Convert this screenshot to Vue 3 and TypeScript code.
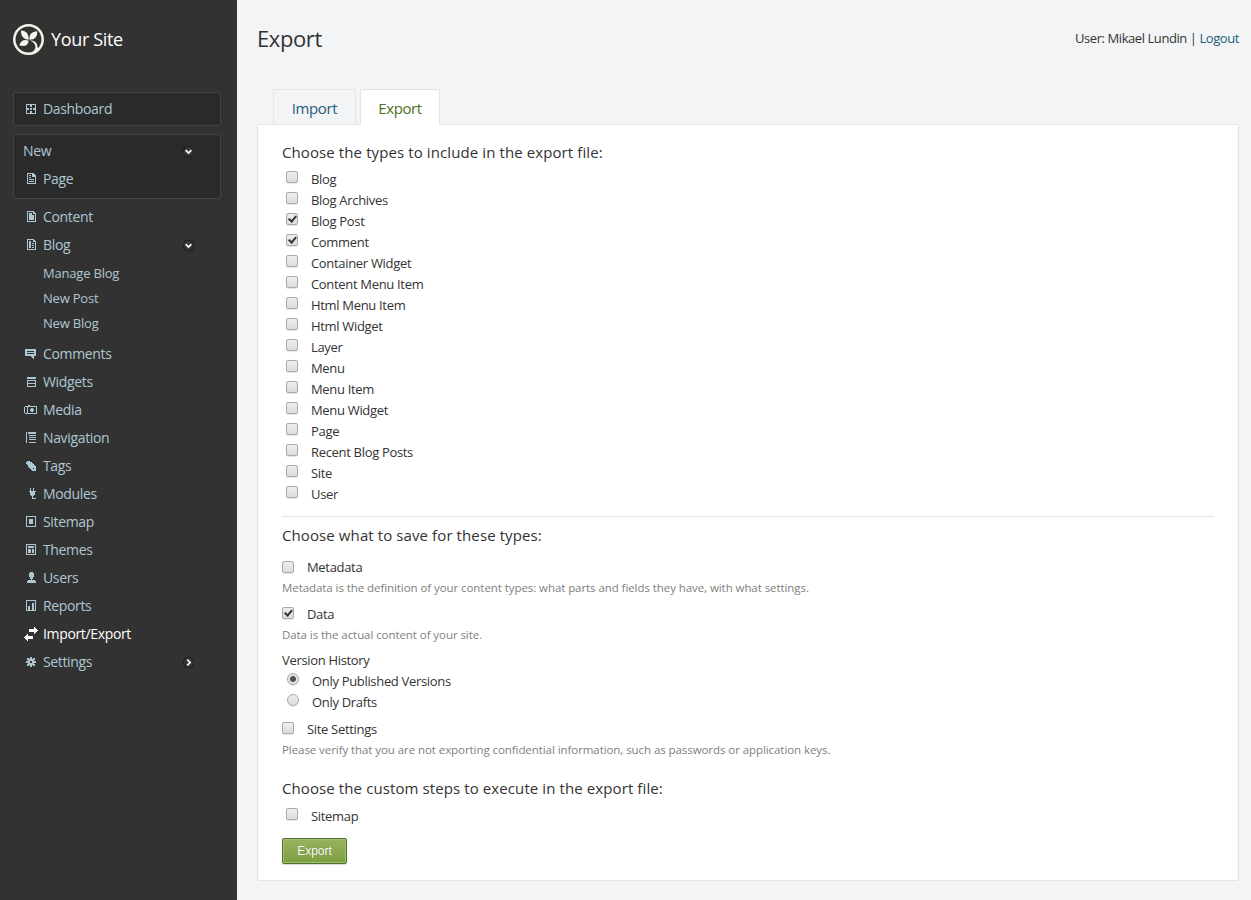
<script setup lang="ts">
import { ref } from 'vue'

interface NavItem {
  label: string
  icon: string
  active?: boolean
  toggle?: 'down' | 'right'
  children?: string[]
}

// Glyphs are drawn on a 16 x 16 grid, one unit per pixel.
const icons: Record<string, string> = {
  dashboard:
    'M3 3h10v10H3z M4 4v3h2v2H4v3h3v-2h2v2h3V9h-2V7h2V4H9v2H7V4z M7 7v2h2V7z',
  page: 'M4 2h6l3 3v8H4z M5 3v9h7V6H9V3z M6 4h2v1H6z M6 6h2v1H6z M6 8h5v1H6z M6 10h5v1H6z',
  content: 'M4 2h6l3 3v8H4z M5 3v9h7V5h-2V3z M6 4h3v2h2v5H6z',
  blog: 'M4 2h6l3 3v8H4z M5 3v9h7V5h-2V3z M6 4h2v7H6z M9 6h2v1H9z M9 8h2v1H9z M9 10h2v1H9z',
  comments: 'M2 3h11v7h-2v3H10v-1H9v-1H8v-1H2z M4 5v1h7V5z M4 7v1h7V7z',
  widgets: 'M4 3h9v2H4z M4 6h9v7H4z M5 7v2h7V7z M5 10v2h7v-2z',
  media:
    'M5 3h2v1h7v8H2v-1H1V5h1V4h3z M2 5v6h2V5z M5 5v6h8V5z M8 6h2v1h1v2h-1v1H8V9H7V7h1z',
  navigation:
    'M3 2h1v11H3z M5 2h8v2H5z M6 5h7v1H6z M6 7h7v1H6z M6 9h7v1H6z M6 12h7v1H6z',
  tags: 'M3 4h1V3h3v1h2v1h1v1h1v1h1v1h1v5h-4v-1H8v-1H7v-1H6V9H5V7H4V6H3z M10 10v1h1v-1z',
  modules:
    'M7 2h1v3h2V2h1v3h2v1h-1v3h-1v1h-1v2h3v1H9v-3H8V9H7V6H6V5h1z',
  sitemap: 'M3 2h10v11H3z M4 3v9h8V3z M6 5h4v5H6z',
  themes: 'M3 2h10v11H3z M4 3v9h8V3z M5 4h6v2H5z M5 7h3v4H5z M9 7h2v4H9z',
  users: 'M7 2h3v1h1v4h-1v2H9v1h3v1h1v2H4v-2h1v-1h3V9H7V7H6V3h1z',
  reports: 'M3 2h10v11H3z M4 3v9h8V3z M5 8h2v4H5z M9 5h2v7H9z',
  transfer:
    'M6 3h5V1h1v1h1v1h1v1h1v1h-1v1h-1v1h-1v1h-1V6H6z M10 10v3H5v2H4v-1H3v-1H2v-1H1v-1h1v-1h1V9h1V8h1v2z',
  settings:
    'M7 3h2v2h1V4h2v2h-1v1h2v2h-2v1h1v2h-2v-1H9v2H7v-2H6v1H4v-2h1V9H3V7h2V6H4V4h2v1h1z M7 7v2h2V7z',
}

const nav: NavItem[] = [
  { label: 'Content', icon: 'content' },
  {
    label: 'Blog',
    icon: 'blog',
    toggle: 'down',
    children: ['Manage Blog', 'New Post', 'New Blog'],
  },
  { label: 'Comments', icon: 'comments' },
  { label: 'Widgets', icon: 'widgets' },
  { label: 'Media', icon: 'media' },
  { label: 'Navigation', icon: 'navigation' },
  { label: 'Tags', icon: 'tags' },
  { label: 'Modules', icon: 'modules' },
  { label: 'Sitemap', icon: 'sitemap' },
  { label: 'Themes', icon: 'themes' },
  { label: 'Users', icon: 'users' },
  { label: 'Reports', icon: 'reports' },
  { label: 'Import/Export', icon: 'transfer', active: true },
  { label: 'Settings', icon: 'settings', toggle: 'right' },
]

const contentTypes: string[] = [
  'Blog',
  'Blog Archives',
  'Blog Post',
  'Comment',
  'Container Widget',
  'Content Menu Item',
  'Html Menu Item',
  'Html Widget',
  'Layer',
  'Menu',
  'Menu Item',
  'Menu Widget',
  'Page',
  'Recent Blog Posts',
  'Site',
  'User',
]

const selectedTypes = ref<string[]>(['Blog Post', 'Comment'])
const metadata = ref(false)
const data = ref(true)
const siteSettings = ref(false)
const sitemapStep = ref(false)
const version = ref<'published' | 'drafts'>('published')
</script>

<template>
  <div class="shell">
    <aside class="sidebar">
      <a class="brand">
        <svg class="logo" viewBox="0 0 31 31" width="31" height="31">
          <circle cx="15.5" cy="15.5" r="14.2" fill="none" stroke="#f4f5ea" stroke-width="2.5" />
          <path
            fill="#f4f5ea"
            d="M15.6 15.7C10.5 15.2 7.8 12 8 6.4c5.300 0 8 3.700 7.600 9.300zM16.500 15.700C15.900 10.600 18.800 7.300 24.200 7.200c.6 5.200-2.700 8.600-7.700 8.500zM15.700 16.700C15.300 21 12 23.200 6.300 21.200c1.400-4.500 5-6.200 9.400-4.500zM16.600 16.500c4.700-.3 8 2 7.900 6.800l2.700 1.700-5.800 4.600-2.600-.9c3.800-2.700 4.400-6 2.600-8.900-1.100-1.700-2.700-2.700-4.800-3.300z"
          />
        </svg>
        <span>Your Site</span>
      </a>

      <div class="box dashboard">
        <a class="row">
          <svg class="icon" viewBox="0 0 16 16"><path fill-rule="evenodd" :d="icons.dashboard" /></svg>
          <span class="text">Dashboard</span>
        </a>
      </div>

      <div class="box new">
        <div class="row">
          <span class="text">New</span>
          <svg class="toggle" viewBox="0 0 11 11">
            <rect x=".5" y=".5" width="10" height="10" rx="4" />
            <path d="M2.700 4.200L5.500 7l2.800-2.800" />
          </svg>
        </div>
        <a class="row">
          <svg class="icon" viewBox="0 0 16 16"><path fill-rule="evenodd" :d="icons.page" /></svg>
          <span class="text">Page</span>
        </a>
      </div>

      <nav class="menu">
        <template v-for="item in nav" :key="item.label">
          <a class="row" :class="{ active: item.active }">
            <svg class="icon" viewBox="0 0 16 16"><path fill-rule="evenodd" :d="icons[item.icon]" /></svg>
            <span class="text">{{ item.label }}</span>
            <svg v-if="item.toggle" class="toggle" viewBox="0 0 11 11">
              <rect x=".5" y=".5" width="10" height="10" rx="4" />
              <path :d="item.toggle === 'down' ? 'M2.700 4.200L5.500 7l2.800-2.800' : 'M4.300 2.700L7.100 5.500L4.300 8.300'" />
            </svg>
          </a>
          <div v-if="item.children" class="children">
            <a v-for="child in item.children" :key="child">{{ child }}</a>
          </div>
        </template>
      </nav>
    </aside>

    <main class="main">
      <header class="top">
        <h1>Export</h1>
        <div class="user">User: Mikael Lundin | <a>Logout</a></div>
      </header>

      <div class="tabs">
        <a class="tab">Import</a>
        <a class="tab current">Export</a>
      </div>

      <form class="panel" @submit.prevent>
        <h2>Choose the types to include in the export file:</h2>
        <div class="options">
          <label v-for="name in contentTypes" :key="name">
            <input v-model="selectedTypes" type="checkbox" :value="name" />
            <span>{{ name }}</span>
          </label>
        </div>

        <h2 class="ruled">Choose what to save for these types:</h2>
        <div class="setting first">
          <label>
            <input v-model="metadata" type="checkbox" />
            <span>Metadata</span>
          </label>
          <p class="hint">
            Metadata is the definition of your content types: what parts and fields they have, with what settings.
          </p>
        </div>
        <div class="setting">
          <label>
            <input v-model="data" type="checkbox" />
            <span>Data</span>
          </label>
          <p class="hint">Data is the actual content of your site.</p>
        </div>
        <div class="history">
          <div class="caption">Version History</div>
          <label>
            <input v-model="version" type="radio" value="published" />
            <span>Only Published Versions</span>
          </label>
          <label>
            <input v-model="version" type="radio" value="drafts" />
            <span>Only Drafts</span>
          </label>
        </div>
        <div class="setting site">
          <label>
            <input v-model="siteSettings" type="checkbox" />
            <span>Site Settings</span>
          </label>
          <p class="hint">
            Please verify that you are not exporting confidential information, such as passwords or application keys.
          </p>
        </div>

        <h2 class="steps">Choose the custom steps to execute in the export file:</h2>
        <div class="options">
          <label>
            <input v-model="sitemapStep" type="checkbox" />
            <span>Sitemap</span>
          </label>
        </div>
        <button type="submit">Export</button>
      </form>
    </main>
  </div>
</template>

<style>
body {
  margin: 0;
  background: #f3f4f6;
}
</style>

<style scoped>
.shell {
  display: flex;
  height: 900px;
  overflow: hidden;
  font: 13px/21px 'Open Sans', 'Noto Sans', sans-serif;
  color: #333;
  white-space: nowrap;
}
.sidebar {
  box-sizing: border-box;
  flex: none;
  width: 237px;
  padding: 24px 16px 0 13px;
  background: #323232;
  color: #afc6d3;
  font-size: 14px;
  letter-spacing: -0.35px;
}
.brand {
  display: flex;
  align-items: center;
  gap: 7px;
  height: 31px;
  color: #fff;
  font-size: 18px;
}
.box {
  box-sizing: border-box;
  border: 1px solid #434345;
  border-radius: 2px;
  background: #2a2a2a;
}
.dashboard {
  height: 34px;
  margin-top: 37px;
  padding-top: 2px;
}
.new {
  height: 65px;
  margin-top: 8px;
  padding-top: 2px;
}
.row {
  display: flex;
  align-items: center;
  height: 28px;
  padding: 0 26px 0 9px;
}
.menu {
  padding: 4px 1px 0;
}
.icon {
  width: 16px;
  height: 16px;
  margin-right: 4px;
  fill: currentColor;
  shape-rendering: crispEdges;
}
.text {
  flex: 1;
  padding-bottom: 2px;
}
.toggle {
  width: 11px;
  height: 11px;
}
.toggle rect {
  fill: #35353b;
  stroke: #1c1c20;
}
.toggle path {
  fill: none;
  stroke: #fff;
  stroke-width: 1.7;
}
.active {
  color: #fff;
}
.children {
  display: flex;
  flex-direction: column;
  padding: 2px 0 4px 29px;
  font-size: 13px;
  line-height: 25px;
  letter-spacing: -0.2px;
}
.main {
  flex: 1;
  padding: 0 12px 0 20px;
}
.top {
  display: flex;
  justify-content: space-between;
  height: 89px;
}
h1 {
  margin: 23px 0 0;
  font-size: 22px;
  font-weight: 400;
  line-height: 30px;
  letter-spacing: -0.4px;
}
.user {
  margin-top: 28px;
  letter-spacing: -0.43px;
}
.user a {
  color: #1e5d7d;
}
.tabs {
  display: flex;
  gap: 4px;
  padding-left: 16px;
}
.tab {
  box-sizing: border-box;
  width: 83px;
  height: 35px;
  border: 1px solid #e4e5e6;
  border-bottom: 0;
  color: #1e5d7d;
  font-size: 15px;
  line-height: 37px;
  letter-spacing: -0.4px;
  text-align: center;
}
.current {
  z-index: 1;
  width: 80px;
  height: 36px;
  margin-bottom: -1px;
  background: #fff;
  color: #4c7022;
}
.panel {
  box-sizing: border-box;
  height: 757px;
  padding: 15px 24px;
  border: 1px solid #e4e5e6;
  border-radius: 2px;
  background: #fff;
}
h2 {
  margin: 0;
  font-size: 15px;
  font-weight: 400;
  line-height: 24px;
  letter-spacing: 0.1px;
}
.options {
  padding: 5px 0 0 4px;
}
label {
  display: flex;
  align-items: flex-start;
  width: max-content;
  height: 21px;
  letter-spacing: -0.32px;
}
input {
  flex: none;
  appearance: none;
  width: 12px;
  height: 12px;
  margin: 2px 13px 0 0;
  border: 1px solid #aaa;
  border-radius: 2px;
  background: linear-gradient(#eee, #dcdcdc);
  box-shadow: 0 1px 1px rgba(0, 0, 0, 0.1);
}
input[type='checkbox']:checked {
  position: relative;
}
input[type='checkbox']:checked::after {
  content: '';
  position: absolute;
  left: 3px;
  top: -0.500px;
  width: 2.500px;
  height: 6px;
  border: solid #333;
  border-width: 0 2.200px 2.200px 0;
  transform: rotate(40deg);
}
input[type='radio'] {
  border-radius: 50%;
}
input[type='radio']:checked {
  background: radial-gradient(circle, #555 0 2.600px, #e4e4e4 3.300px);
}
.ruled {
  margin-top: 11px;
  padding-top: 6px;
  border-top: 1px solid #e4e5e6;
}
.setting {
  margin-top: 6px;
}
.setting input {
  margin-top: 3px;
}
.first {
  margin-top: 10px;
}
.first input {
  margin-top: 4px;
}
.hint {
  margin: 0;
  color: #808080;
  font-size: 11.500px;
  line-height: 20px;
  letter-spacing: -0.07px;
}
.history {
  margin-top: 5px;
}
.history label {
  margin-left: 5px;
}
.caption {
  letter-spacing: -0.32px;
}
.steps {
  margin-top: 16px;
}
.steps + .options {
  padding-top: 6px;
}
button {
  box-sizing: border-box;
  display: block;
  width: 65px;
  height: 26px;
  margin-top: 11px;
  padding: 0;
  border: 1px solid #487328;
  border-radius: 2px;
  background: linear-gradient(#98b260, #7e9f40);
  box-shadow: inset 0 0 0 1px #a5bf75, 0 1px 1px rgba(0, 0, 0, 0.15);
  color: #fff;
  font: 12px/24px 'Liberation Sans', Arial, sans-serif;
  text-shadow: 0 0 1px rgba(40, 60, 10, 0.5);
}
</style>
